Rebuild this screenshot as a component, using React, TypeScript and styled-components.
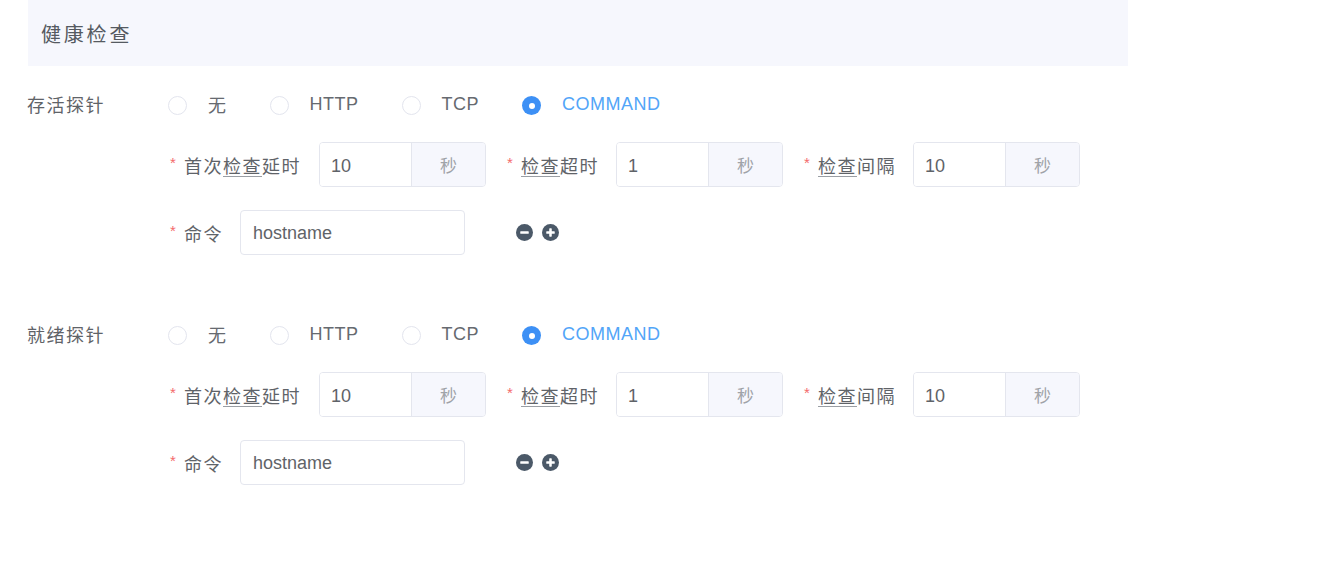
import React from 'react';
import styled, { createGlobalStyle } from 'styled-components';

const GlobalStyle = createGlobalStyle`
  html, body {
    margin: 0;
    padding: 0;
    background: #ffffff;
  }
  body {
    font-family: "Liberation Sans", "Noto Sans CJK SC", sans-serif;
    color: #5a5e66;
  }
`;

const Page = styled.div`
  width: 1332px;
  height: 576px;
  padding: 0 0 0 27px;
  box-sizing: border-box;
  overflow: hidden;
`;

const Header = styled.div`
  width: 1100px;
  height: 66px;
  margin-left: 1px;
  padding-left: 13px;
  box-sizing: border-box;
  display: flex;
  align-items: center;
  background: #f6f7fd;
  font-size: 20px;
  letter-spacing: 2.8px;
  color: #555a61;
`;

const Section = styled.div<{ $top: number }>`
  display: flex;
  flex-direction: column;
  margin-top: ${(p) => p.$top}px;
`;

const ProbeRow = styled.div`
  display: flex;
  align-items: center;
  height: 36px;
`;

const ProbeLabel = styled.div`
  width: 141px;
  font-size: 18px;
  letter-spacing: 1.5px;
  color: #5f6368;
`;

const RadioGroup = styled.div`
  display: flex;
  align-items: center;
`;

const RadioItem = styled.label<{ $checked?: boolean }>`
  display: flex;
  align-items: center;
  margin-right: 43px;
  font-size: 18px;
  letter-spacing: 0.5px;
  color: ${(p) => (p.$checked ? '#52a5f8' : '#666a70')};
`;

const RadioDot = styled.span<{ $checked?: boolean }>`
  position: relative;
  width: 19px;
  height: 19px;
  border-radius: 50%;
  box-sizing: border-box;
  margin-right: 21px;
  margin-top: 3px;
  border: ${(p) => (p.$checked ? 'none' : '1px solid #e3e5ee')};
  background: ${(p) => (p.$checked ? '#3d90f5' : '#fff')};

  &::after {
    content: '';
    display: ${(p) => (p.$checked ? 'block' : 'none')};
    position: absolute;
    left: 50%;
    top: 50%;
    width: 6px;
    height: 6px;
    margin: -3px 0 0 -3px;
    border-radius: 50%;
    background: #fff;
  }
`;

const Fields = styled.div`
  display: flex;
  flex-direction: column;
  padding-left: 143px;
  margin-top: 20px;
  gap: 23px;
`;

const FieldRow = styled.div`
  display: flex;
  align-items: center;
  height: 45px;
`;

const Field = styled.div`
  display: flex;
  align-items: center;
  margin-right: 21px;
`;

const Required = styled.span`
  color: #f46a6a;
  font-size: 15px;
  width: 14px;
  margin-top: -4px;
`;

const FieldLabel = styled.span<{ $gap: number }>`
  font-size: 18px;
  letter-spacing: 1.5px;
  color: #5f6368;
  margin-right: ${(p) => p.$gap}px;
`;

const Marked = styled.span`
  text-decoration: underline;
  text-decoration-color: #9a9ea4;
  text-underline-offset: 3px;
`;

const InputGroup = styled.div`
  display: flex;
  width: 167px;
  height: 45px;
  box-sizing: border-box;
  border: 1px solid #e4e6ee;
  border-radius: 4px;
  overflow: hidden;
`;

const NumberInput = styled.div`
  width: 91px;
  display: flex;
  align-items: center;
  padding: 3px 0 0 11px;
  box-sizing: border-box;
  font-size: 18px;
  color: #5f6368;
  background: #fff;
`;

const Addon = styled.div`
  flex: 1;
  display: flex;
  align-items: center;
  justify-content: center;
  border-left: 1px solid #e4e6ee;
  background: #f6f7fd;
  color: #a0a3a8;
  font-size: 17px;
`;

const TextInput = styled.div`
  width: 225px;
  height: 45px;
  box-sizing: border-box;
  border: 1px solid #e4e6ee;
  border-radius: 4px;
  display: flex;
  align-items: center;
  padding: 2px 0 0 12px;
  font-size: 18px;
  color: #5f6368;
`;

const Actions = styled.div`
  display: flex;
  align-items: center;
  gap: 9px;
  margin-left: 51px;
`;

const IconButton = styled.span`
  display: flex;
  width: 17px;
  height: 17px;
`;

const MinusIcon = () => (
  <svg width="17" height="17" viewBox="0 0 16 16">
    <circle cx="8" cy="8" r="8" fill="#4b5968" />
    <rect x="4" y="6.8" width="8" height="2.4" rx="0.6" fill="#fff" />
  </svg>
);

const PlusIcon = () => (
  <svg width="17" height="17" viewBox="0 0 16 16">
    <circle cx="8" cy="8" r="8" fill="#4b5968" />
    <rect x="4" y="6.8" width="8" height="2.4" rx="0.6" fill="#fff" />
    <rect x="6.8" y="4" width="2.4" height="8" rx="0.6" fill="#fff" />
  </svg>
);

const options = ['无', 'HTTP', 'TCP', 'COMMAND'];

const timings = [
  { pre: '首次', mark: '检查', post: '延时', value: '10' },
  { pre: '', mark: '检查', post: '超时', value: '1' },
  { pre: '', mark: '检查', post: '间隔', value: '10' },
];

const Probe = ({ title, top }: { title: string; top: number }) => (
  <Section $top={top}>
    <ProbeRow>
      <ProbeLabel>{title}</ProbeLabel>
      <RadioGroup>
        {options.map((o) => (
          <RadioItem key={o} $checked={o === 'COMMAND'}>
            <RadioDot $checked={o === 'COMMAND'} />
            {o}
          </RadioItem>
        ))}
      </RadioGroup>
    </ProbeRow>
    <Fields>
      <FieldRow>
        {timings.map((t, i) => (
          <Field key={`${title}-t-${i}`}>
            <Required>*</Required>
            <FieldLabel $gap={i === 0 ? 18 : 17}>
              {t.pre}
              <Marked>{t.mark}</Marked>
              {t.post}
            </FieldLabel>
            <InputGroup>
              <NumberInput>{t.value}</NumberInput>
              <Addon>秒</Addon>
            </InputGroup>
          </Field>
        ))}
      </FieldRow>
      <FieldRow>
        <Field>
          <Required>*</Required>
          <FieldLabel $gap={17}>命令</FieldLabel>
          <TextInput>hostname</TextInput>
          <Actions>
            <IconButton>
              <MinusIcon />
            </IconButton>
            <IconButton>
              <PlusIcon />
            </IconButton>
          </Actions>
        </Field>
      </FieldRow>
    </Fields>
  </Section>
);

export default function App() {
  return (
    <>
      <GlobalStyle />
      <Page>
        <Header>健康检查</Header>
        <Probe title="存活探针" top={20} />
        <Probe title="就绪探针" top={61} />
      </Page>
    </>
  );
}
